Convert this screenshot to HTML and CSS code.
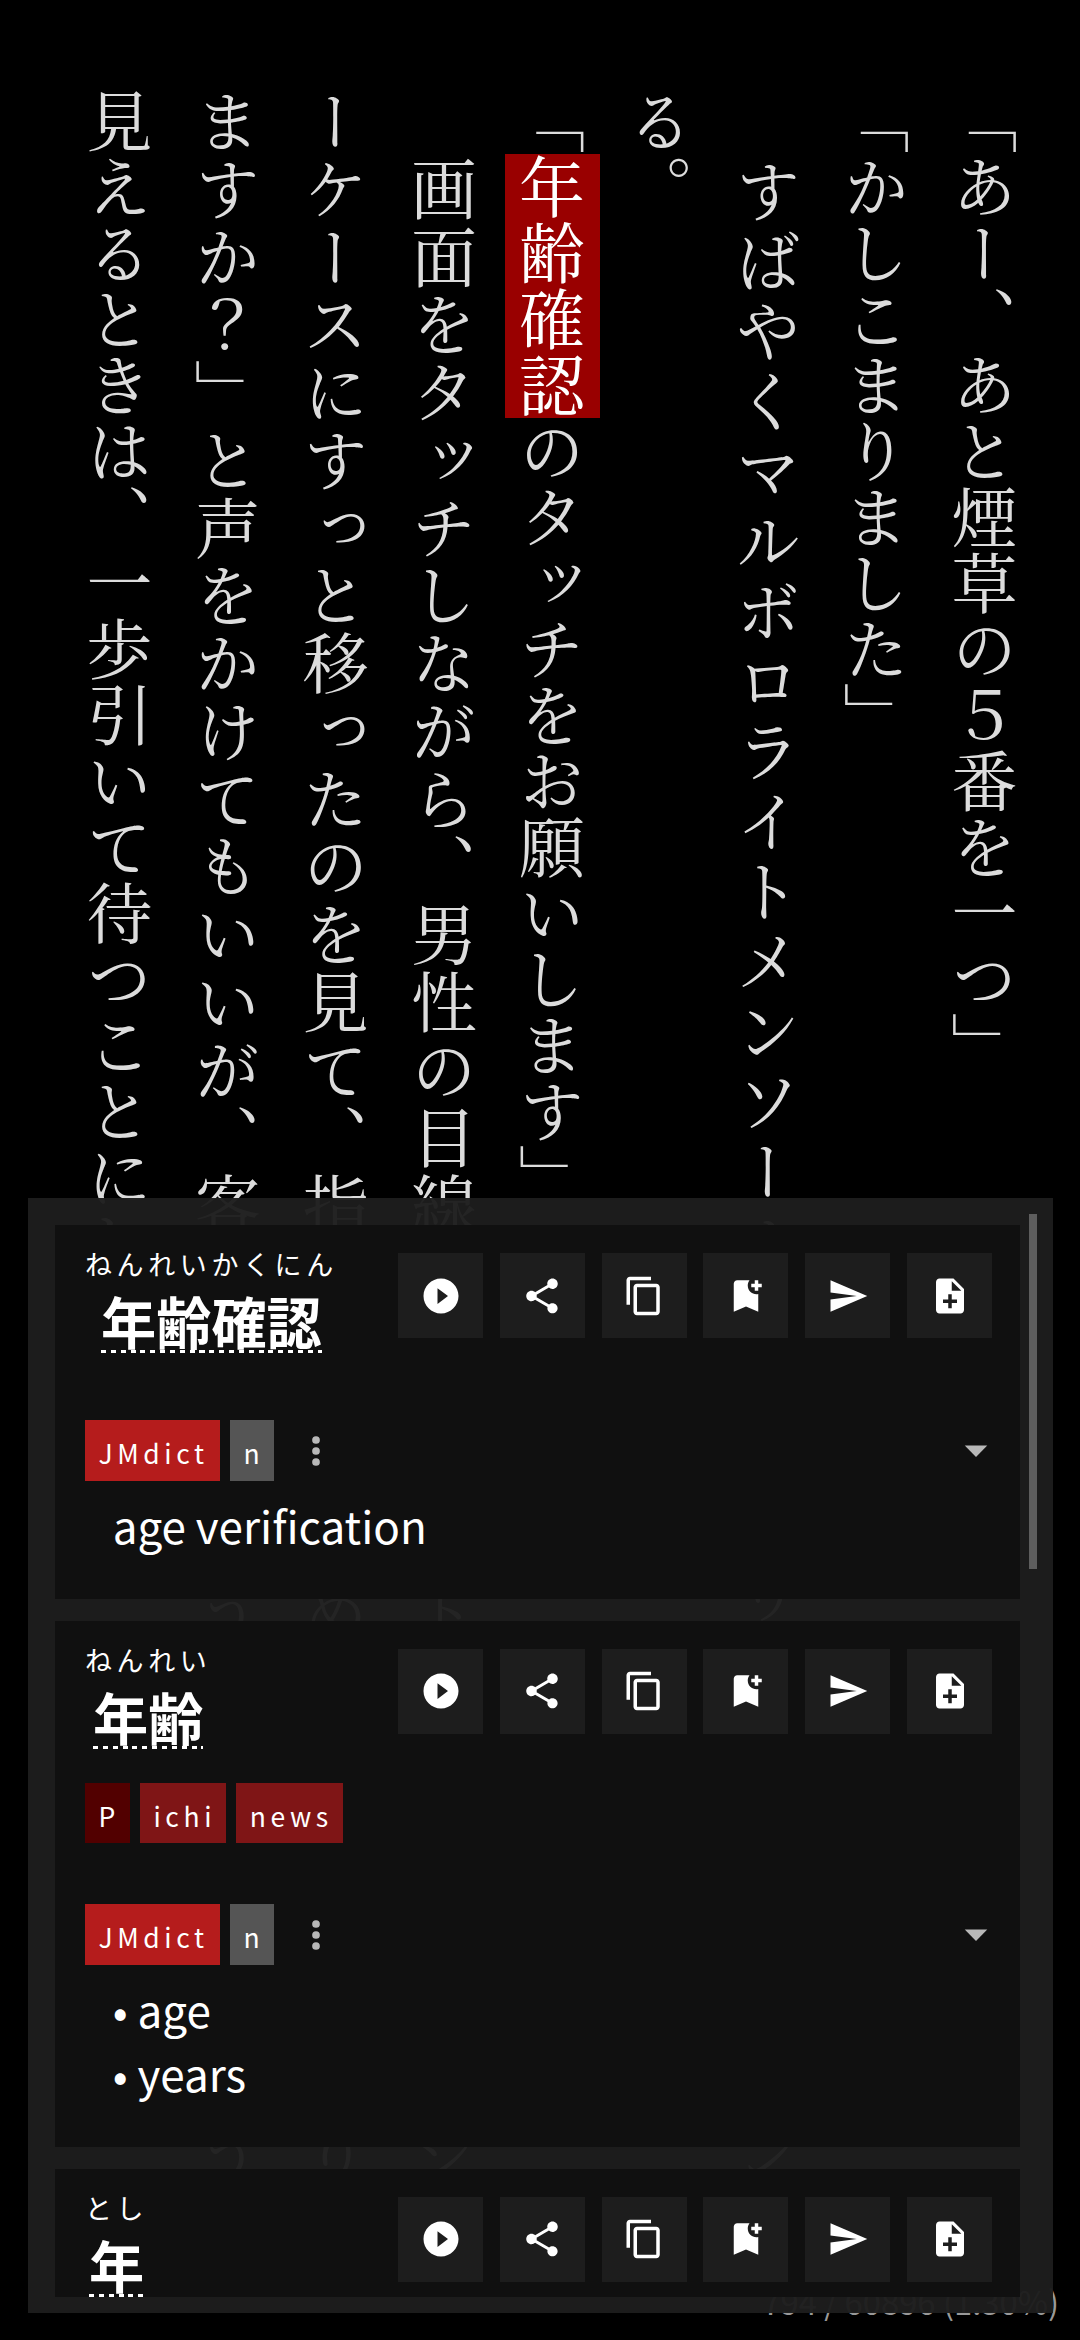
FILE: index.html
```html
<!DOCTYPE html>
<html lang="ja">
<head>
<meta charset="utf-8">
<title>Reader</title>
<link rel="stylesheet" href="styles.css">
</head>
<body>
<svg class="sprite" aria-hidden="true">
  <symbol id="play" viewBox="0 0 24 24"><path d="M12 2C6.48 2 2 6.48 2 12s4.48 10 10 10 10-4.48 10-10S17.52 2 12 2zm-2 14.5v-9l6 4.5-6 4.5z"/></symbol>
  <symbol id="share" viewBox="0 0 24 24"><path d="M18 16.08c-.76 0-1.44.3-1.96.77L8.91 12.7c.05-.23.09-.46.09-.7s-.04-.47-.09-.7l7.05-4.11c.54.5 1.25.81 2.04.81 1.66 0 3-1.34 3-3s-1.34-3-3-3-3 1.34-3 3c0 .24.04.47.09.7L8.04 9.81C7.5 9.31 6.79 9 6 9c-1.66 0-3 1.34-3 3s1.34 3 3 3c.79 0 1.5-.31 2.04-.81l7.12 4.16c-.05.21-.08.43-.08.65 0 1.61 1.31 2.92 2.92 2.92s2.92-1.31 2.92-2.92-1.31-2.92-2.92-2.92z"/></symbol>
  <symbol id="copy" viewBox="0 0 24 24"><path d="M16 1H4c-1.100 0-2 .9-2 2v14h2V3h12V1zm3 4H8c-1.100 0-2 .9-2 2v14c0 1.100.9 2 2 2h11c1.100 0 2-.9 2-2V7c0-1.100-.9-2-2-2zm0 16H8V7h11v14z"/></symbol>
  <symbol id="bookmark" viewBox="0 0 24 24"><path d="M21 7h-2v2h-2V7h-2V5h2V3h2v2h2v2zm-2 14l-7-3-7 3V5c0-1.100.9-2 2-2h7c-.63.84-1 1.870-1 3 0 2.760 2.240 5 5 5 .34 0 .68-.03 1-.1V21z"/></symbol>
  <symbol id="send" viewBox="0 0 24 24"><path d="M2.010 21L23 12 2.010 3 2 10l15 2-15 2z"/></symbol>
  <symbol id="note" viewBox="0 0 24 24"><path d="M14 2H6c-1.100 0-1.990.9-1.990 2L4 20c0 1.100.89 2 1.990 2H18c1.100 0 2-.9 2-2V8l-6-6zm2 14h-3v3h-2v-3H8v-2h3v-3h2v3h3v2zm-3-7V3.500L18.500 9H13z"/></symbol>
  <symbol id="more" viewBox="0 0 24 24"><circle cx="12" cy="6" r="2.100"/><circle cx="12" cy="12" r="2.100"/><circle cx="12" cy="18" r="2.100"/></symbol>
  <symbol id="arrow" viewBox="0 0 24 24"><path d="M7 9.500l5 5.200 5-5.200z"/></symbol>
</svg>

<main class="book">
  <p>「あー、あと煙草の５番を一つ」</p>
  <p>「かしこまりました」</p>
  <p class="loose">　すばやくマルボロライトメンソールを抜き取り、レジでスキャンす</p>
  <p>る。</p>
  <p>「<mark>年齢確認</mark>のタッチをお願いします」</p>
  <p class="spread">　画面をタッチしながら、男性の目線がファーストフードが並んだショ</p>
  <p class="spread">ーケースにすっと移ったのを見て、指の動きを止める。「何かお取りし</p>
  <p class="spread">ますか？」と声をかけてもいいが、客がどうしようか迷っているように</p>
  <p>見えるときは、一歩引いて待つことにしている。</p>
</main>

<footer class="progress">794 / 60896 (1.30%)</footer>

<section class="popup">
  <div class="entries">
    <article class="card">
      <header class="head">
        <div class="term"><span class="reading">ねんれいかくにん</span><b class="word">年齢確認</b></div>
        <nav class="actions">
          <button class="btn"><svg><use href="#play"/></svg></button><button class="btn"><svg><use href="#share"/></svg></button><button class="btn"><svg><use href="#copy"/></svg></button><button class="btn"><svg><use href="#bookmark"/></svg></button><button class="btn"><svg><use href="#send"/></svg></button><button class="btn"><svg><use href="#note"/></svg></button>
        </nav>
      </header>
      <div class="source">
        <span class="tag dict">JMdict</span><span class="tag pos">n</span><svg class="more"><use href="#more"/></svg><svg class="arrow"><use href="#arrow"/></svg>
      </div>
      <div class="defs"><div>age verification</div></div>
    </article>

    <article class="card">
      <header class="head">
        <div class="term"><span class="reading">ねんれい</span><b class="word">年齢</b></div>
        <nav class="actions">
          <button class="btn"><svg><use href="#play"/></svg></button><button class="btn"><svg><use href="#share"/></svg></button><button class="btn"><svg><use href="#copy"/></svg></button><button class="btn"><svg><use href="#bookmark"/></svg></button><button class="btn"><svg><use href="#send"/></svg></button><button class="btn"><svg><use href="#note"/></svg></button>
        </nav>
      </header>
      <div class="freq"><span class="tag common">P</span><span class="tag list">ichi</span><span class="tag list">news</span></div>
      <div class="source">
        <span class="tag dict">JMdict</span><span class="tag pos">n</span><svg class="more"><use href="#more"/></svg><svg class="arrow"><use href="#arrow"/></svg>
      </div>
      <div class="defs"><div>• age</div><div>• years</div></div>
    </article>

    <article class="card">
      <header class="head">
        <div class="term"><span class="reading">とし</span><b class="word">年</b></div>
        <nav class="actions">
          <button class="btn"><svg><use href="#play"/></svg></button><button class="btn"><svg><use href="#share"/></svg></button><button class="btn"><svg><use href="#copy"/></svg></button><button class="btn"><svg><use href="#bookmark"/></svg></button><button class="btn"><svg><use href="#send"/></svg></button><button class="btn"><svg><use href="#note"/></svg></button>
        </nav>
      </header>
    </article>
  </div>
  <div class="scrollbar"></div>
</section>
</body>
</html>
```
FILE: styles.css
```css
* {
  box-sizing: border-box;
}

html,
body {
  margin: 0;
  height: 2340px;
  overflow: hidden;
  background: #000;
}

body {
  position: relative;
  width: 1080px;
  color: #fff;
  font-family: "Noto Sans CJK JP", sans-serif;
}

.sprite {
  display: none;
}

/* Vertical book text */
.book {
  width: 1080px;
  height: 2340px;
  padding: 88px 42px 0 0;
  writing-mode: vertical-rl;
  font-family: "Noto Serif CJK JP", "Noto Serif JP", "Noto Sans CJK JP", serif;
  font-size: 66px;
  font-weight: 400;
  line-height: 108.120px;
  color: #dcdcdc;
  white-space: nowrap;
  text-spacing-trim: space-all;
}

.book p {
  margin: 0;
}

.book .loose {
  letter-spacing: 4px;
}

.book .spread {
  letter-spacing: 1.75px;
}

.book mark {
  background: #900;
  color: #fff;
}

.progress {
  position: absolute;
  right: 21px;
  bottom: 16px;
  font-size: 32.800px;
  line-height: 46px;
  color: #999;
}

/* Dictionary popup */
.popup {
  position: absolute;
  left: 27.500px;
  top: 1197.500px;
  width: 1025px;
  height: 1115px;
  padding: 16.500px 16px 16px 27.500px;
  display: flex;
  justify-content: space-between;
  background: rgba(29, 29, 29, 0.965);
}

.entries {
  width: 964.500px;
  padding-top: 11px;
  overflow: hidden;
}

.scrollbar {
  width: 8px;
  height: 355px;
  background: #5e5e5e;
}

.card {
  padding: 28px 27.500px 42px 30px;
  margin-bottom: 22px;
  background: #101010;
}

.head {
  display: flex;
  justify-content: space-between;
  align-items: flex-start;
}

.term {
  display: flex;
  flex-direction: column;
  align-items: center;
  height: 120px;
}

.reading {
  font-size: 27px;
  letter-spacing: 4.600px;
  line-height: 22px;
}

.word {
  font-size: 55.200px;
  line-height: 67px;
  margin-top: 12px;
  height: 66px;
  background: repeating-linear-gradient(90deg, #fff 0 5px, transparent 5px 9.850px) left bottom / 100% 3px no-repeat;
}

.actions {
  display: flex;
  gap: 16.800px;
}

.btn {
  width: 85px;
  height: 85px;
  padding: 0;
  border: 0;
  background: #1d1d1d;
  display: flex;
  align-items: center;
  justify-content: center;
}

.btn svg {
  width: 42px;
  height: 42px;
  fill: #fff;
}

.freq,
.source {
  display: flex;
  align-items: center;
  gap: 10.500px;
}

.freq {
  margin-top: 14px;
}

.source {
  margin-top: 47px;
}

.freq + .source {
  margin-top: 61px;
}

.tag {
  height: 60.500px;
  padding: 8px 9.800px 0 13.400px;
  font-size: 26.500px;
  letter-spacing: 4.600px;
  line-height: 50px;
}

.dict {
  padding-right: 11px;
  background: #b51c1c;
}

.pos { background: #555; }
.common { background: #520000; }
.list { background: #7f1516; }

.more,
.arrow {
  fill: #b8b8b8;
}

.more {
  width: 44px;
  height: 44px;
  margin: 2px 0 0 9px;
}

.arrow {
  width: 54px;
  height: 54px;
  margin: 1px -11px 0 auto;
}

.defs {
  margin-top: 12px;
  padding-left: 27.700px;
  font-size: 44px;
  line-height: 64px;
}
```
